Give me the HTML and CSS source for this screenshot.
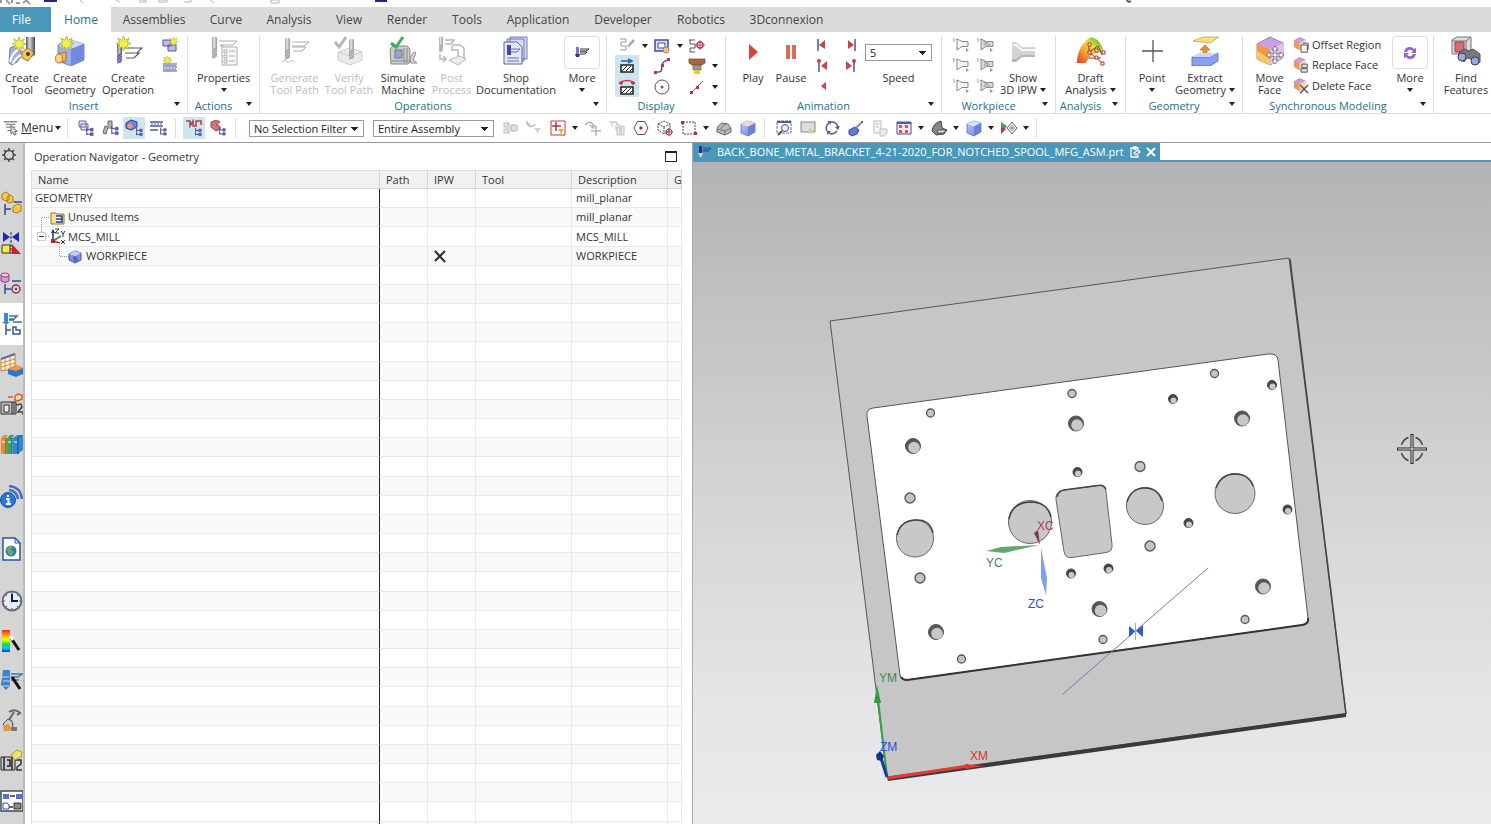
FILE: index.html
```html
<!DOCTYPE html>
<html lang="en">
<head>
<meta charset="utf-8">
<title>Operation Navigator - Geometry</title>
<link rel="stylesheet" href="styles.css">
</head>
<body>
<svg class="defs" aria-hidden="true">
  <defs>
    <linearGradient id="steel"><stop offset="0" stop-color="#55565c"/><stop offset=".4" stop-color="#d6d8e2"/><stop offset="1" stop-color="#4a4a52"/></linearGradient>
    <linearGradient id="blueface" x1="0" y1="0" x2="1" y2="1"><stop offset="0" stop-color="#b9c8fb"/><stop offset="1" stop-color="#6f85dd"/></linearGradient>
    <linearGradient id="bg" x1="0" y1="0" x2="0" y2="1"><stop offset="0" stop-color="#b2b3b4"/><stop offset=".25" stop-color="#c2c4c6"/><stop offset=".5" stop-color="#d2d4d6"/><stop offset=".8" stop-color="#e2e4e6"/><stop offset="1" stop-color="#eaebec"/></linearGradient>
    <linearGradient id="rainbow" x1="0" y1="0" x2="0" y2="1"><stop offset="0" stop-color="#f22"/><stop offset=".25" stop-color="#fa0"/><stop offset=".45" stop-color="#ef0"/><stop offset=".65" stop-color="#1d3"/><stop offset=".82" stop-color="#0cf"/><stop offset="1" stop-color="#12f"/></linearGradient>
    <linearGradient id="draft" x1="0" y1="1" x2="1" y2="0"><stop offset="0" stop-color="#e23b2a"/><stop offset=".35" stop-color="#f5a13c"/><stop offset=".6" stop-color="#e6dc42"/><stop offset="1" stop-color="#35a838"/></linearGradient>
  </defs>
  <symbol id="star" viewBox="0 0 12 12"><path d="M6 0l1.300 3.400L10.600 1.600 9 5l3 1-3 1.200 1.500 3.300L7.300 8.800 6 12 4.700 8.800 1.500 10.500 3 7.200 0 6l3-1L1.400 1.600l3.300 1.800z" fill="#f0ef4d" stroke="#a5a53a" stroke-width=".6"/></symbol>
  <symbol id="endmill" viewBox="0 0 8 28"><path d="M1 2q3-2 6 0v12l-1 3H2l-1-3z" fill="url(#steel)"/><path d="M1 14h6v10l-2 2H2l-1-2z" fill="#8a8fcb"/><path d="M1 18l6-4M1 22l6-5M1 26l6-5" stroke="#3f4382"/></symbol>
  <symbol id="tree" viewBox="0 0 10 10"><path d="M2 0v9M2 3h4M2 8h4" stroke="#34347c" fill="none"/><path d="M6 1.500h3v3H6zM6 6.500h3v3H6z" fill="#6a6ad0" stroke="#34347c" stroke-width=".7"/></symbol>
  <symbol id="cone" viewBox="0 0 18 18"><path d="M1 2v4M3 3.500h2" stroke="#999"/><path d="M4 3l5 2.500h6v5H9L4 14z" fill="#f5f5f5" stroke="#8b8b8b"/><path d="M13 12l3 2-3 2z" fill="#999"/></symbol>
  <symbol id="conef" viewBox="0 0 18 18"><path d="M1 2v4M3 3.500h2" stroke="#999"/><path d="M4 3l5 2.500h7v5H9L4 14z" fill="#d8d8d8" stroke="#8b8b8b"/><path d="M7 5l4 5M9 5l4 5M7 10l3-5" stroke="#999"/><path d="M13 12l3 2-3 2z" fill="#999"/></symbol>
  <symbol id="facecube" viewBox="0 0 20 20"><path d="M3 6l7-4 7 3v8l-7 5-7-4z" fill="#cf9be2" stroke="#8a6aa0" stroke-width=".7"/><path d="M3 6l7 3.500V18l-7-4z" fill="#f39a4a"/><path d="M10 9.500L17 5v8l-7 5z" fill="#fbd7a6"/></symbol>
  <symbol id="box" viewBox="0 0 18 18"><path d="M2 5l7-3 7 2v9l-7 4-7-3z" fill="url(#blueface)" stroke="#4a61b4" stroke-width=".7"/><path d="M2 5l7 2.500L16 4 9 2z" fill="#dbe4ff"/><path d="M9 7.500L16 4v9l-7 4z" fill="#6c80d4"/></symbol>
</svg>

<header class="app-head">
  <div class="quick-strip">
    <svg viewBox="0 0 1140 8" width="1140" height="8" aria-hidden="true"><path d="M1 0v3M6 0l4 4M12 0v3M16 3h4M23 3l4-3M26 0l4 4" stroke="#9a9a9a" stroke-width="2"/><path d="M44 0h13v2H44z" fill="#26267c"/><path d="M80 0l3 3M116 0l4 2M139 0h7v2h-7M158 0h9v2h-9M184 2h7V0M210 0l4 3M271 0h8v3h-8z" stroke="#b5b5b5" fill="none"/><path d="M375 1h12" stroke="#23238c" stroke-width="2"/><path d="M1127 0q1 3 4 1" stroke="#555" stroke-width="2" fill="none"/></svg>
  </div>
  <nav class="tabs">
    <button class="tab tab-file">File</button><button class="tab tab-on">Home</button><button class="tab w86">Assemblies</button><button class="tab w58">Curve</button><button class="tab w68">Analysis</button><button class="tab w52">View</button><button class="tab w64">Render</button><button class="tab w56">Tools</button><button class="tab w86">Application</button><button class="tab w84">Developer</button><button class="tab w72">Robotics</button><button class="tab w99">3Dconnexion</button>
  </nav>
</header>

<section class="ribbon">
  <div class="group g-insert">
    <div class="tools">
      <button class="tool"><svg viewBox="0 0 30 30"><path d="M19 1h9v18l-5 3-4-3z" fill="url(#steel)"/><path d="M15 16l6-4 6 5-6 8-6-3z" fill="#f3c64f" stroke="#7c6425" stroke-width=".8"/><circle cx="21" cy="18" r="2" fill="#3b3420"/><path d="M3 12q8-4 11 0v9l-4 5-5 3-3-2z" fill="#a6addb" stroke="#5c639c" stroke-width=".8"/><path d="M3 26q2-10 11-14M6 28q2-6 8-9" stroke="#fff" stroke-width="2" fill="none"/><use href="#star" x="5" y="1" width="14" height="14"/></svg><span>Create<br>Tool</span></button>
      <button class="tool"><svg viewBox="0 0 30 30"><path d="M3 9l12-5 14 4v16l-13 6-13-5z" fill="#9aaef4" stroke="#5b6fc0" stroke-width=".8"/><path d="M3 9l13 4 13-5-14-4z" fill="#cfd9ff"/><path d="M16 13l13-5v16l-13 6z" fill="#7287e0"/><path d="M3 18l8-2v9l-7 2z" fill="#fbb450" stroke="#a15e12" stroke-width=".8"/><ellipse cx="4" cy="22.500" rx="3.500" ry="4.500" fill="#ffd286" stroke="#a15e12" stroke-width=".8"/><use href="#star" x="4" y="0" width="15" height="15"/></svg><span>Create<br>Geometry</span></button>
      <button class="tool"><svg viewBox="0 0 30 30"><use href="#endmill" x="3" y="6" width="7" height="23"/><path d="M11 12h18l-5 5h-12M12 17h14l-5 5h-8" fill="none" stroke="#55555c" stroke-width="1.200"/><use href="#star" x="3" y="0" width="15" height="15"/></svg><span>Create<br>Operation</span></button>
      <div class="stack">
        <button class="mini" aria-label="Create method"><svg viewBox="0 0 18 18"><path d="M2 4h8v6H2zM7 9h8v6H7z" fill="#b9bfea" stroke="#55598d"/><use href="#star" x="8" y="1" width="9" height="9"/></svg></button>
        <button class="mini" aria-label="Create program"><svg viewBox="0 0 18 18"><path d="M2 8h14M2 11h14M2 15h14" stroke="#4a5590"/><path d="M2 9h13v6H2z" fill="#93a4cf"/><path d="M3 12h12" stroke="#fff" stroke-dasharray="2 1"/><use href="#star" x="2" y="0" width="9" height="9"/></svg></button>
      </div>
    </div>
    <footer>Insert<i class="caret"></i></footer>
  </div>
  <div class="group g-actions">
    <div class="tools">
      <button class="tool"><svg viewBox="0 0 30 30" class="grey"><use href="#endmill" x="2" y="0" width="7" height="24"/><path d="M10 5h18l-4 4H11M11 10h4" fill="none" stroke="#777"/><path d="M13 11h15v18H13z" fill="#f5f5f5" stroke="#777"/><path d="M15 14h3v3h-3zM15 19h3v3h-3zM15 24h3v3h-3zM20 15h6M20 20h6M20 25h6" fill="none" stroke="#777"/></svg><span>Properties</span><i class="caret"></i></button>
    </div>
    <footer>Actions<i class="caret"></i></footer>
  </div>
  <div class="group g-operations">
    <div class="tools">
      <button class="tool" disabled><svg viewBox="0 0 30 30" class="grey"><use href="#endmill" x="4" y="1" width="7" height="24"/><path d="M12 6h17l-5 4H12M12 11h14l-4 4h-9" fill="none" stroke="#777"/><path d="M2 26l4-2 2 3 4-3 2 2" stroke="#999" fill="none"/></svg><span>Generate<br>Tool Path</span></button>
      <button class="tool" disabled><svg viewBox="0 0 30 30" class="grey"><path d="M4 16l12-4 12 4v8l-12 5-12-5z" fill="#ddd" stroke="#aaa"/><path d="M4 16l12 4 12-4" fill="none" stroke="#aaa"/><use href="#endmill" x="14" y="2" width="7" height="23"/><path d="M1 6l4 5L12 1" fill="none" stroke="#888" stroke-width="3"/></svg><span>Verify<br>Tool Path</span></button>
      <button class="tool"><svg viewBox="0 0 30 30"><path d="M2 13l3-3h14l3 3v13l-2 2H3z" fill="#ccc" stroke="#888"/><path d="M7 14h7v8H7z" fill="#8fa9dd" stroke="#777"/><path d="M16 12v15M19 12v15M3 25h18" stroke="#888"/><path d="M22 22l4-6 2 1-3 7 4 3h-6z" fill="#ddd" stroke="#888"/><path d="M3 7l5 4L15 1" fill="none" stroke="#33b35b" stroke-width="3"/></svg><span>Simulate<br>Machine</span></button>
      <button class="tool" disabled><svg viewBox="0 0 30 30" class="grey"><use href="#endmill" x="1" y="0" width="6" height="17"/><path d="M8 4h9l-3 4H8M15 9h8l4 3v12M15 10v4h6v8" fill="none" stroke="#888" stroke-width="1.500"/><path d="M12 24l10-4 7 3-8 6z" fill="#e2e2e2" stroke="#888"/><path d="M3 18v5h5M6 20l3 3-3 3" fill="none" stroke="#888" stroke-width="1.500"/></svg><span>Post<br>Process</span></button>
      <button class="tool"><svg viewBox="0 0 30 30"><path d="M9 1h17v22H9zM6 3h17v22H6z" fill="#d8dbf7" stroke="#7277b4"/><path d="M3 6h13l5 5v17H3z" fill="#e6e8fc" stroke="#5b60a4"/><path d="M7 9v10M9 9v10" stroke="#444d9c" stroke-width="2"/><path d="M10 13h9l-3 3h-6M6 22h12M6 25h12" stroke="#6a6fa8" fill="none"/></svg><span>Shop<br>Documentation</span></button>
      <button class="tool"><span class="framed"><svg viewBox="0 0 18 18"><path d="M3 3h3v8H3z" fill="#777cc5"/><path d="M2 10h5l-1 3H3z" fill="#34347c"/><path d="M7 5h9l-3 2H7M7 8h7l-2 2H7" stroke="#333" fill="none"/></svg></span><span>More</span><i class="caret"></i></button>
    </div>
    <footer>Operations<i class="caret"></i></footer>
  </div>
  <div class="group g-display">
    <div class="tools">
      <button class="mini" aria-label="Path display"><svg viewBox="0 0 18 18"><path d="M2 2h6v3H3v4h5v4H2" fill="none" stroke="#999"/><path d="M9 9l6-7 2 2-6 6z" fill="#aaa"/></svg></button><i class="caret"></i>
      <button class="mini" aria-label="Layers"><svg viewBox="0 0 18 18"><path d="M2 3h13v11H2z" fill="#e0e3fb" stroke="#4249a5" stroke-width="1.500"/><path d="M5 6h7v5H5z" fill="#fff" stroke="#4249a5"/><circle cx="13" cy="13" r="3" fill="#efc65d" stroke="#8d7fae"/></svg></button><i class="caret"></i>
      <button class="mini" aria-label="Path points"><svg viewBox="0 0 18 18"><path d="M1 3h6M2 3v4h5v4H2v4h5" fill="none" stroke="#555"/><circle cx="12" cy="8" r="3" fill="none" stroke="#b5405a" stroke-width="1.500"/><path d="M12 3v10M7 8h10" stroke="#b5405a"/></svg></button><i></i>
      <button class="mini on" aria-label="Show 2D"><svg viewBox="0 0 18 18"><path d="M3 4h10M10 2l4 2-4 2" fill="none" stroke="#2465c0" stroke-width="1.500"/><path d="M3 8h12v7H3z" fill="#fff" stroke="#222" stroke-width="1.500"/><path d="M4 14l5-5M8 14l5-5M12 14l3-3" stroke="#222"/></svg></button><i></i>
      <button class="mini" aria-label="Spline"><svg viewBox="0 0 18 18"><path d="M3 15c8 1 5-4 6-7s2-4 6-5" fill="none" stroke="#6a4a58" stroke-width="1.500"/><path d="M1 14h3v3H1zM8 7h3v3H8zM14 1h3v3h-3z" fill="#c0344a"/></svg></button><i></i>
      <button class="mini" aria-label="Holder"><svg viewBox="0 0 18 18"><path d="M1 2h16v4l-3 2H4L1 6z" fill="#a9683f" stroke="#6c4428" stroke-width=".7"/><path d="M5 8h8v5H5z" fill="#999" stroke="#666" stroke-width=".7"/><path d="M6 13h6v4H6z" fill="#e7c93c"/></svg></button><i class="caret"></i>
      <button class="mini on" aria-label="Show 3D"><svg viewBox="0 0 18 18"><path d="M3 7V4q6-3 12 0v3" fill="none" stroke="#c63a4a" stroke-width="1.500"/><path d="M1 5h4M13 5h4" stroke="#c63a4a" stroke-width="2"/><path d="M3 9h12v7H3z" fill="#fff" stroke="#222" stroke-width="1.500"/><path d="M4 15l5-5M8 15l5-5M12 15l3-3" stroke="#222"/></svg></button><i></i>
      <button class="mini" aria-label="Circle"><svg viewBox="0 0 18 18"><circle cx="9" cy="9" r="7" fill="none" stroke="#555"/><circle cx="9" cy="9" r="1.500" fill="#c0344a"/></svg></button><i></i>
      <button class="mini" aria-label="Line"><svg viewBox="0 0 18 18"><path d="M3 15L15 3" stroke="#666"/><path d="M2 13h3v3H2zM8 8h3v3H8z" fill="#c0344a"/></svg></button><i class="caret"></i>
    </div>
    <footer>Display<i class="caret"></i></footer>
  </div>
  <div class="group g-animation">
    <div class="tools">
      <button class="tool"><svg viewBox="0 0 30 30"><path d="M11 8l9 8-9 8z" fill="#d8443a"/></svg><span>Play</span></button>
      <button class="tool"><svg viewBox="0 0 30 30"><path d="M10 9h4v14h-4zM16 9h4v14h-4z" fill="#df6a5b"/></svg><span>Pause</span></button>
      <div class="stack">
        <button class="mini" aria-label="To start"><svg viewBox="0 0 18 18"><path d="M4 3v12" stroke="#55557c" stroke-width="1.500"/><path d="M11 4v9L5 9z" fill="#c8434c"/></svg></button>
        <button class="mini" aria-label="Previous path"><svg viewBox="0 0 18 18"><path d="M5 3v13" stroke="#55557c" stroke-width="1.500"/><circle cx="5" cy="5" r="2" fill="#c8434c"/><path d="M13 5v9L7 10z" fill="#c8434c"/></svg></button>
        <button class="mini" aria-label="Step back"><svg viewBox="0 0 18 18"><path d="M12 5v8L7 9z" fill="#c8434c"/></svg></button>
      </div>
      <div class="stack">
        <button class="mini" aria-label="To end"><svg viewBox="0 0 18 18"><path d="M13 3v12" stroke="#55557c" stroke-width="1.500"/><path d="M6 4v9l6-4z" fill="#c8434c"/></svg></button>
        <button class="mini" aria-label="Next path"><svg viewBox="0 0 18 18"><path d="M12 3v13" stroke="#55557c" stroke-width="1.500"/><circle cx="12" cy="5" r="2" fill="#c8434c"/><path d="M4 5v9l6-4z" fill="#c8434c"/></svg></button>
      </div>
      <label class="speed"><select><option>5</option></select><span>Speed</span></label>
    </div>
    <footer>Animation<i class="caret"></i></footer>
  </div>
  <div class="group g-workpiece">
    <div class="tools">
      <div class="stack"><button class="mini" aria-label="Workpiece 1"><svg><use href="#cone"/></svg></button><button class="mini" aria-label="Workpiece 2"><svg><use href="#cone"/></svg></button><button class="mini" aria-label="Workpiece 3"><svg><use href="#cone"/></svg></button></div>
      <div class="stack"><button class="mini" aria-label="Workpiece 4"><svg><use href="#conef"/></svg></button><button class="mini" aria-label="Workpiece 5"><svg><use href="#conef"/></svg></button><button class="mini" aria-label="Workpiece 6"><svg><use href="#conef"/></svg></button></div>
      <button class="tool"><svg viewBox="0 0 30 30"><path d="M4 6h4l6 5h13v10H14l-6 5H4z" fill="#d3d3d3"/><path d="M5 9h3l6 5h13" stroke="#f7f7f7" stroke-width="2" fill="none"/><path d="M4 23h4l6-4h13v2H14l-6 5H4z" fill="#b5b5b5"/></svg><span>Show<br>3D IPW<i class="caret"></i></span></button>
    </div>
    <footer>Workpiece<i class="caret"></i></footer>
  </div>
  <div class="group g-analysis">
    <div class="tools">
      <button class="tool"><svg viewBox="0 0 30 30"><path d="M1 27C1 16 6 6 15 1c8 2 12 9 13 16-8-2-14 1-18 10z" fill="url(#draft)"/><path d="M13 8v8l6 5 6 5M13 16l9-6 4 9M13 22h12" stroke="#7c3b20" fill="none"/><path d="M12 7h3v3h-3zM12 15h3v3h-3zM19 13h3v3h-3zM26 15h3v3h-3zM19 20h3v3h-3zM25 26h3v3h-3z" fill="#fff" stroke="#b2301c"/></svg><span>Draft<br>Analysis<i class="caret"></i></span></button>
    </div>
    <footer>Analysis<i class="caret"></i></footer>
  </div>
  <div class="group g-geometry">
    <div class="tools">
      <button class="tool"><svg viewBox="0 0 30 30"><path d="M16 4v22M5 15h21" stroke="#555" stroke-width="1.300"/></svg><span>Point</span><i class="caret"></i></button>
      <button class="tool"><svg viewBox="0 0 30 30"><path d="M3 5l10-4h16l-9 6z" fill="#fae07e" stroke="#b99a3c" stroke-width=".7"/><path d="M13 20v-6h-3l5-5 5 5h-3v6z" fill="#f08b3a" stroke="#b15a17" stroke-width=".6"/><path d="M2 21l7-4h19l-7 5z" fill="#bccbff"/><path d="M2 21h18l8-4v8l-8 5H2z" fill="#88a0ee" stroke="#5268b5" stroke-width=".8"/><path d="M2 21l7-4h19l-8 4z" fill="#cbd7ff"/></svg><span>Extract<br>Geometry<i class="caret"></i></span></button>
    </div>
    <footer>Geometry<i class="caret"></i></footer>
  </div>
  <div class="group g-sync">
    <div class="tools">
      <button class="tool"><svg viewBox="0 0 30 30"><path d="M2 8l13-7 13 6v15l-13 7-13-6z" fill="#caa0e0" stroke="#86689e" stroke-width=".8"/><path d="M2 8l13 6v15L2 23z" fill="#f49a3d"/><path d="M2 15l13 8v6L2 23z" fill="#f9c66a"/><path d="M15 14l13-7v15l-13 7z" fill="#dcc2ec"/><path d="M20 10l3 4h-2v4h4v-2l4 3-4 3v-2h-4v4h2l-3 4-3-4h2v-4h-4v2l-4-3 4-3v2h4v-4h-2z" fill="#fff" stroke="#555" stroke-width=".8"/></svg><span>Move<br>Face</span></button>
      <div class="stack wide">
        <button class="mini named"><svg viewBox="0 0 20 20"><use href="#facecube" width="17" height="17"/><path d="M10 10h7v8h-7zM12 8h6v7" fill="#fff" stroke="#444"/></svg>Offset Region</button>
        <button class="mini named"><svg viewBox="0 0 20 20"><use href="#facecube" width="17" height="17"/><path d="M11 9h6v4h-6zM10 14h7v4h-7z" fill="#ddd" stroke="#555"/></svg>Replace Face</button>
        <button class="mini named"><svg viewBox="0 0 20 20"><use href="#facecube" width="17" height="17"/><path d="M9 9l9 9M18 9l-9 9" stroke="#555" stroke-width="1.500"/></svg>Delete Face</button>
      </div>
      <button class="tool"><span class="framed"><svg viewBox="0 0 18 18"><path d="M3 8q1-5 6-5 3 0 4 2l2-1v5h-5l2-2q-4-3-6 1zM15 10q-1 5-6 5-3 0-4-2l-2 1V9h5l-2 2q4 3 6-1z" fill="#9a62c4"/></svg></span><span>More</span><i class="caret"></i></button>
    </div>
    <footer>Synchronous Modeling<i class="caret"></i></footer>
  </div>
  <div class="group g-find">
    <div class="tools">
      <button class="tool"><svg viewBox="0 0 30 30"><path d="M1 4l5-3h14v12l-4 5H1z" fill="#dcdcdc" stroke="#777"/><path d="M1 5h14v12M15 5l5-4" fill="none" stroke="#777"/><path d="M4 6h9v7l-4 3H4z" fill="#da6a78" stroke="#a23f4d"/><path d="M8 16l6-3 4 2 4-2 7 5v8l-5 3-4-6-4-1-3 4-5-4z" fill="#77787f" stroke="#555"/><circle cx="11" cy="21" r="4" fill="#9ba6e8" stroke="#444"/><circle cx="24" cy="25" r="4" fill="#9ba6e8" stroke="#444"/></svg><span>Find<br>Features</span></button>
    </div>
  </div>
</section>

<section class="subbar">
  <button class="menu"><svg viewBox="0 0 18 18"><path d="M1 2h15M3 5h11M3 8h11M5 12h8" stroke="#888" stroke-width="1.500"/><path d="M9 6v10l2-2 2 3 2-1-2-3h3z" fill="#ddd" stroke="#555"/></svg><span><u>M</u>enu</span><i class="caret"></i></button>
  <span class="sep"></span>
  <button class="mini" aria-label="Program order view"><svg viewBox="0 0 18 18"><path d="M2 2h7v6H2zM4 5h7v6H4z" fill="#dfe1f7" stroke="#666a9e"/><use href="#tree" x="8" y="8" width="9" height="9"/></svg></button>
  <button class="mini" aria-label="Machine tool view"><svg viewBox="0 0 18 18"><path d="M2 14l2-7 3 1-2 7zM7 2h4v7H7z" fill="#b4b6cc" stroke="#667"/><circle cx="8" cy="8" r="1.500" fill="#d9a646"/><use href="#tree" x="9" y="6" width="9" height="11"/></svg></button>
  <button class="mini on" aria-label="Geometry view"><svg viewBox="0 0 18 18"><path d="M1 4l5-3 6 2v5l-6 3-5-2z" fill="#6f85dd" stroke="#333f7c"/><circle cx="5" cy="7" r="2.500" fill="#ef9b6b"/><use href="#tree" x="10" y="9" width="8" height="8"/></svg></button>
  <button class="mini" aria-label="Method view"><svg viewBox="0 0 18 18"><path d="M1 3h13M1 7h13M1 11h8" stroke="#4a5d94" stroke-width="1.500"/><path d="M2 5h12" stroke="#4a5d94" stroke-dasharray="2 1"/><use href="#tree" x="10" y="8" width="8" height="9"/></svg></button>
  <span class="sep"></span>
  <button class="mini on" aria-label="Operation filter"><svg viewBox="0 0 18 18"><path d="M1 2h4v5l3-5v5h3V2h5v4" fill="none" stroke="#b13a48" stroke-width="1.500"/><use href="#tree" x="9" y="8" width="8" height="10"/></svg></button>
  <button class="mini" aria-label="Feature filter"><svg viewBox="0 0 18 18"><path d="M2 3q6-3 9 0l-4 3q5 0 4 4l-4 2-5-4z" fill="#cd7480" stroke="#8c4a55"/><use href="#tree" x="9" y="8" width="8" height="9"/></svg></button>
  <span class="sep"></span>
  <select class="filter" aria-label="Selection filter"><option>No Selection Filter</option></select>
  <select class="scope" aria-label="Selection scope"><option>Entire Assembly</option></select>
  <button class="mini" aria-label="Select all"><svg viewBox="0 0 18 18" class="dim"><path d="M3 4h4v4H3zM3 10h4v4H3zM8 3v12M10 6h6v6h-6z" fill="#ddd" stroke="#888"/><circle cx="13" cy="9" r="3" fill="#ccc" stroke="#888"/></svg></button>
  <button class="mini" aria-label="Reset filter"><svg viewBox="0 0 18 18" class="dim"><path d="M2 5q4 5 8 0M2 5V2M2 5h3" fill="none" stroke="#888" stroke-width="1.500"/><path d="M9 9h7l-3 4v4l-1-4z" fill="#aaa"/></svg></button>
  <button class="mini" aria-label="Detail filter"><svg viewBox="0 0 18 18"><path d="M2 2h14v14H2z" fill="#fff" stroke="#c23b3b"/><path d="M7 3v9M3 7h9" stroke="#a33648" stroke-width="1.500"/><path d="M9 10h6l-2 3v3l-2-3z" fill="#f0a840"/></svg></button><i class="caret"></i>
  <button class="mini" aria-label="Snap rotate"><svg viewBox="0 0 18 18" class="dim"><path d="M1 6q4-5 8-1v3M6 6l3 3 2-3M12 7v10M7 12h10" fill="none" stroke="#777" stroke-width="1.500"/></svg></button>
  <button class="mini" aria-label="Similar"><svg viewBox="0 0 18 18" class="dim"><path d="M1 3h8v3h4M4 4v4M8 6v5M9 8h3v8H9zM13 7h3v9h-3z" fill="#ddd" stroke="#888"/></svg></button>
  <button class="mini" aria-label="Polygon"><svg viewBox="0 0 18 18"><path d="M5.500 2.500h7L16 9l-3.500 6.500h-7L2 9z" fill="#fff" stroke="#555"/><circle cx="9" cy="9" r="1.700" fill="#b32f40"/></svg></button>
  <button class="mini" aria-label="Inner cube"><svg viewBox="0 0 18 18"><path d="M2 5l6-3 6 3v6l-6 4-6-4zM2 5l6 3 6-3M8 8v7" fill="none" stroke="#444" stroke-dasharray="2 1"/><circle cx="13" cy="13" r="3" fill="none" stroke="#a33648"/><path d="M13 9v8M9 13h8" stroke="#a33648"/></svg></button>
  <button class="mini" aria-label="Rectangle select"><svg viewBox="0 0 18 18"><path d="M3 3h12v12H3z" fill="none" stroke="#444" stroke-dasharray="2 1"/><path d="M1 2h3v3H1zM14 13h3v3h-3z" fill="#b32f40"/></svg></button><i class="caret"></i>
  <button class="mini" aria-label="Show faces"><svg viewBox="0 0 18 18"><path d="M2 10q0-3 5-6l6 1 3 4v4l-6 3-8-3z" fill="#bbb" stroke="#666"/><path d="M2 10l8 2 6-3M10 12v4M6 10q1-4 5-5" stroke="#777" fill="none"/></svg></button>
  <button class="mini" aria-label="Highlight cube"><svg viewBox="0 0 18 18"><use href="#box"/><path d="M2 5l7 2.500L16 4 9 2z" fill="#f9d3d3"/></svg></button>
  <span class="sep tight"></span>
  <button class="mini" aria-label="Fit"><svg viewBox="0 0 18 18"><path d="M2 2h14v12H2z" fill="none" stroke="#5c6ab4" stroke-dasharray="3 1"/><path d="M2 3h14" stroke="#4a5aa0" stroke-width="2"/><circle cx="10" cy="9" r="3.500" fill="#e6efff" stroke="#555"/><path d="M7 12l-4 4" stroke="#555" stroke-width="2"/></svg></button>
  <button class="mini" aria-label="Window"><svg viewBox="0 0 18 18"><path d="M2 3h14v10H2z" fill="#ddd" stroke="#888"/><path d="M10 9l5 2-2 4-4-2z" fill="#d7c79a"/></svg></button>
  <button class="mini" aria-label="Rotate"><svg viewBox="0 0 18 18"><path d="M4 12a6 6 0 0 1 2-8M8 3a6 6 0 0 1 7 5M14 12a6 6 0 0 1-8 2" fill="none" stroke="#4e5e90" stroke-width="1.500"/><path d="M4 2h4v4zM17 7l-2 4-3-3zM4 16v-4h4z" fill="#4e5e90"/></svg></button>
  <button class="mini" aria-label="Perspective"><svg viewBox="0 0 18 18"><path d="M2 11l6-3 4 3-2 4-5 2-3-2z" fill="#6378d8" stroke="#39478f"/><path d="M9 9l5-5" stroke="#7c86c9" stroke-width="2"/><path d="M14 3h2" stroke="#b33" stroke-width="2"/></svg></button>
  <button class="mini" aria-label="Hide"><svg viewBox="0 0 18 18" class="dim"><path d="M3 2h7v12H3zM5 5h3M5 8h3" fill="#eee" stroke="#888"/><path d="M9 10h7v4l-3 3H9z" fill="#ddd" stroke="#888"/></svg></button>
  <button class="mini" aria-label="Layout"><svg viewBox="0 0 18 18"><path d="M2 3h14v12H2z" fill="#f6eaea" stroke="#3d4f9c"/><path d="M2 3h14v2H2z" fill="#4b5fb2"/><path d="M4 6h3v3H4zM10 6h3v3h-3zM4 11h3v3H4zM10 11h3v3h-3z" fill="#d4555f"/></svg></button><i class="caret"></i>
  <button class="mini" aria-label="Shading"><svg viewBox="0 0 18 18"><path d="M2 12q1-8 9-10l1 7 5 2-3 4-8 1z" fill="#888" stroke="#444"/><path d="M8 11h8l-2 3H7z" fill="#ddd" stroke="#555"/></svg></button><i class="caret"></i>
  <button class="mini" aria-label="View orientation"><svg viewBox="0 0 18 18"><use href="#box"/></svg></button><i class="caret"></i>
  <button class="mini" aria-label="Section"><svg viewBox="0 0 18 18"><path d="M1 3l6 4-6 8z" fill="#4a9c57"/><path d="M1 8l5 2-5 5z" fill="#c0344a"/><path d="M12 3l5 6-5 6-5-6z" fill="#eee" stroke="#666"/><path d="M12 6v6M9 9h6" stroke="#888"/></svg></button><i class="caret"></i>
  <span class="sep tight"></span>
</section>

<main class="work">
  <aside class="rail">
    <button class="r-gear" aria-label="Settings"><svg viewBox="0 0 16 16"><circle cx="8" cy="8" r="4.500" fill="none" stroke="#444" stroke-width="1.500"/><path d="M8 1v3M8 12v3M1 8h3M12 8h3M3 3l2 2M11 11l2 2M13 3l-2 2M5 11l-2 2" stroke="#444" stroke-width="1.500"/></svg></button>
    <button aria-label="Assembly navigator"><svg viewBox="0 0 24 24"><path d="M2 3l4-2 3 2v6l-3 1-4-2zM7 6l4-2 2 2v5l-4 1-2-1zM13 16l4-3 4 1v6l-4 2-4-1z" fill="#f7c948" stroke="#ad7a12"/><path d="M5 13v11M5 18h6M14 11h8" stroke="#3b478c" fill="none" stroke-width="1.500"/></svg></button>
    <button aria-label="Constraint navigator"><svg viewBox="0 0 24 24"><path d="M3 1l7 5-7 5zM19 1l-7 5 7 5z" fill="#1b25c0"/><path d="M2 14h8v8H2z" fill="#ffe93a" stroke="#333"/><path d="M12 13l9 10h-9z" fill="#c9242b"/><path d="M11 1v22" stroke="#333" stroke-dasharray="3 1"/></svg></button>
    <button aria-label="Part navigator"><svg viewBox="0 0 24 24"><path d="M1 4v6q4 3 8 0V4z" fill="#d69acb" stroke="#8b3f7c"/><ellipse cx="5" cy="4" rx="4" ry="2" fill="#f0cbe8" stroke="#8b3f7c"/><path d="M5 13v10M5 18h6M12 10h9" stroke="#3b478c" fill="none" stroke-width="1.500"/><circle cx="16" cy="18" r="4" fill="none" stroke="#8b2f5f" stroke-width="1.500"/><circle cx="16" cy="18" r="1.200" fill="#8b2f5f"/></svg></button>
    <button class="active" aria-label="Operation navigator"><svg viewBox="0 0 24 24"><path d="M3 1h4v9H9l-4 3-4-3h2z" fill="#3f86d2"/><path d="M8 4h8l-3 3H8M8 8h5M12 10h9" stroke="#3a6ea8" fill="none" stroke-width="1.500"/><path d="M5 13v10M5 18h5M12 15h3v3h4v4h-7z" stroke="#38588c" fill="none" stroke-width="1.500"/></svg></button>
    <button aria-label="Machining wizard"><svg viewBox="0 0 24 24"><path d="M1 6l14-5v15l-14 2z" fill="#fff1d8" stroke="#c0812c"/><path d="M1 6l14-5" stroke="#5566c8" stroke-width="2"/><path d="M1 10l14-4M1 14l14-4M5 5v12M10 3v13" stroke="#d48f3c"/><path d="M8 16l8-4 7 3v6l-7 3-8-3z" fill="#2878d2"/><path d="M8 16l8-4 7 3-7 3z" fill="#f59a32"/></svg></button>
    <button aria-label="Machine navigator"><svg viewBox="0 0 24 24"><path d="M1 9h15v12H1z" fill="#bbb" stroke="#333"/><path d="M4 12h5v7H4zM12 9v12M14 9v12" fill="#eee" stroke="#333"/><path d="M16 12l5-1 1 3-4 5h5v3" stroke="#444" fill="none" stroke-width="1.500"/><path d="M8 4h5M15 3l3-2 4 1v4l-4 2-3-1z" fill="#fbd6bf" stroke="#db5a1e" stroke-width="1.500"/></svg></button>
    <button aria-label="Reuse library"><svg viewBox="0 0 24 24"><path d="M1 5l3-3h4l-2 3v16H1z" fill="#ef8a2c"/><path d="M7 5l3-3h4l-2 3v16H7z" fill="#39a845"/><path d="M13 5l4-3h6v15l-5 4h-5z" fill="#2f87d8"/><path d="M6 5v16M12 5v16M18 5v16M18 5l4-3" stroke="#1d4e80"/><path d="M2 9h3M8 9h3M14 9h3" stroke="#fff"/></svg></button>
    <button class="tall" aria-label="HD3D tools"><svg viewBox="0 0 24 24"><circle cx="8" cy="15" r="7.500" fill="#2b78d4" stroke="#17509c"/><path d="M8 10v2M6 14h2.500v5M6 19h5" stroke="#fff" stroke-width="2" fill="none"/><path d="M9 5q8 1 9 9M9 1q12 1 13 13" fill="none" stroke="#4170bf" stroke-width="2.500"/></svg></button>
    <button class="tall" aria-label="Web browser"><svg viewBox="0 0 24 24"><path d="M3 1h12l5 5v17H3z" fill="#fff" stroke="#2b56a5" stroke-width="1.500"/><path d="M15 1v5h5" fill="none" stroke="#2b56a5"/><circle cx="11" cy="14" r="5.500" fill="#3873c0"/><path d="M7 11q3-3 6-2l-2 4 3 2-3 4q-4-2-4-8z" fill="#64b255"/></svg></button>
    <button class="tall" aria-label="History"><svg viewBox="0 0 24 24"><circle cx="12" cy="12" r="9.500" fill="#e7edfb" stroke="#666e7a" stroke-width="2"/><path d="M12 5v7h6" fill="none" stroke="#111c50" stroke-width="2"/><path d="M12 3v2M12 19v2M3 12h2M19 12h2M6 6l1 1M18 18l-1-1M18 6l-1 1M6 18l1-1" stroke="#555"/></svg></button>
    <button aria-label="Colour wizard"><svg viewBox="0 0 24 24"><path d="M2 1h8v22H2z" fill="url(#rainbow)"/><path d="M11 9l8 12" stroke="#111" stroke-width="3"/><path d="M10 7l3 4" stroke="#fff" stroke-width="3"/></svg></button>
    <button aria-label="Operation wizard"><svg viewBox="0 0 24 24"><path d="M3 1h7v16l-4 4-5-5z" fill="#4182ca"/><path d="M1 8h8M3 12h8M2 17h8" stroke="#bde" /><path d="M11 5h11l-4 3h-7M11 11h8" stroke="#4773ae" stroke-width="1.500" fill="none"/><path d="M12 8l8 12" stroke="#111" stroke-width="3"/></svg></button>
    <button aria-label="Robot wizard"><svg viewBox="0 0 24 24"><path d="M9 3q6-4 11 1l-3 2M14 3l-5 8 4 5" fill="none" stroke="#666" stroke-width="2"/><path d="M8 10l4 2 1 7H6l-3-4z" fill="#ccc" stroke="#555"/><path d="M3 17l5-2 3 3-1 4H4z" fill="#ee9138"/><path d="M11 18h6v4h-6z" fill="#777"/></svg></button>
    <button aria-label="Tool library"><svg viewBox="0 0 24 24"><path d="M1 8h14v13H1z" fill="#ccc" stroke="#222"/><path d="M4 8v13M7 11h3v6H7M12 8v13" stroke="#222" stroke-width="1.500" fill="none"/><path d="M15 11h6v4l-4 3v3h5" stroke="#333" stroke-width="1.500" fill="none"/><path d="M11 6l6-5 5 2-1 5-6 3z" fill="#eee46b" stroke="#a69d32"/></svg></button>
    <button aria-label="Workspace map"><svg viewBox="0 0 24 24"><path d="M1 2h22v20H1z" fill="#fff" stroke="#35505c" stroke-width="1.500"/><path d="M3 5h6v5H3zM16 5h6v5h-6z" fill="#606ad0"/><path d="M10 7h5M9 18h4" stroke="#333" stroke-width="1.500"/><path d="M3 14h4l2 2v4H3z" fill="#fff" stroke="#4048b0"/><path d="M14 14h7v6h-7z" fill="#888" stroke="#333"/></svg></button>
  </aside>

  <section class="navigator">
    <header><h1>Operation Navigator - Geometry</h1><button aria-label="Maximise"></button></header>
    <div class="table-wrap">
    <table>
      <colgroup><col><col class="c48"><col class="c48"><col class="c96"><col class="c96"><col class="c14"></colgroup>
      <thead><tr><th>Name</th><th>Path</th><th>IPW</th><th>Tool</th><th>Description</th><th>G</th></tr></thead>
      <tbody>
        <tr><td>GEOMETRY</td><td></td><td></td><td></td><td>mill_planar</td><td></td></tr>
        <tr><td><div class="node"><svg width="33" height="19" viewBox="0 0 33 19"><path d="M6.500 19V9.500H15" fill="none" stroke="#999" stroke-dasharray="1 1"/><path d="M16 5h5l1 1h7v10H16z" fill="#f5e393" stroke="#8f7b2f"/><path d="M21 8h6v6h-6M21 11h6" fill="#fff" stroke="#223a9a" stroke-width="1.500"/></svg>Unused Items</div></td><td></td><td></td><td></td><td>mill_planar</td><td></td></tr>
        <tr><td><div class="node"><svg width="33" height="19" viewBox="0 0 33 19"><path d="M6.500 0v6M11 9.500h4" stroke="#999" stroke-dasharray="1 1"/><path d="M2.500 5.500h8v8h-8z" fill="#fff" stroke="#ccc"/><path d="M4 9.500h5" stroke="#333"/><path d="M18 15V3" stroke="#1c2f90" stroke-width="1.500"/><path d="M16 6l2-4 2 4z" fill="#1c2f90"/><path d="M18 14l8-5" stroke="#288c3c" stroke-width="1.500"/><path d="M18 14l7 2" stroke="#b9252b" stroke-width="1.500"/><path d="M16 12h4v4h-4z" fill="#b9252b"/><path d="M20 2h4l-4 4h4M26 4l2 3 2-3M28 7v3M26 13l4 4M30 13l-4 4" fill="none" stroke="#333"/></svg>MCS_MILL</div></td><td></td><td></td><td></td><td>MCS_MILL</td><td></td></tr>
        <tr><td><div class="node"><svg width="51" height="19" viewBox="0 0 51 19"><path d="M24.500 0v9.500H34" fill="none" stroke="#999" stroke-dasharray="1 1"/><path d="M34 7l6-3 6 2v7l-6 3-6-3z" fill="#7e91e6" stroke="#4858a6"/><path d="M34 7l6 2 6-3-6-2z" fill="#c4cffb"/><path d="M38 10l3-1 2 2v3l-3 1-2-2z" fill="#5467c8"/></svg>WORKPIECE</div></td><td></td><td class="mark"><svg width="14" height="14" viewBox="0 0 14 14"><path d="M2 2l10 11M12 2L2 12" stroke="#2b2b2b" stroke-width="2"/></svg></td><td></td><td>WORKPIECE</td><td></td></tr>
        <tr><td></td><td></td><td></td><td></td><td></td><td></td></tr><tr><td></td><td></td><td></td><td></td><td></td><td></td></tr><tr><td></td><td></td><td></td><td></td><td></td><td></td></tr><tr><td></td><td></td><td></td><td></td><td></td><td></td></tr>
        <tr><td></td><td></td><td></td><td></td><td></td><td></td></tr><tr><td></td><td></td><td></td><td></td><td></td><td></td></tr><tr><td></td><td></td><td></td><td></td><td></td><td></td></tr><tr><td></td><td></td><td></td><td></td><td></td><td></td></tr>
        <tr><td></td><td></td><td></td><td></td><td></td><td></td></tr><tr><td></td><td></td><td></td><td></td><td></td><td></td></tr><tr><td></td><td></td><td></td><td></td><td></td><td></td></tr><tr><td></td><td></td><td></td><td></td><td></td><td></td></tr>
        <tr><td></td><td></td><td></td><td></td><td></td><td></td></tr><tr><td></td><td></td><td></td><td></td><td></td><td></td></tr><tr><td></td><td></td><td></td><td></td><td></td><td></td></tr><tr><td></td><td></td><td></td><td></td><td></td><td></td></tr>
        <tr><td></td><td></td><td></td><td></td><td></td><td></td></tr><tr><td></td><td></td><td></td><td></td><td></td><td></td></tr><tr><td></td><td></td><td></td><td></td><td></td><td></td></tr><tr><td></td><td></td><td></td><td></td><td></td><td></td></tr>
        <tr><td></td><td></td><td></td><td></td><td></td><td></td></tr><tr><td></td><td></td><td></td><td></td><td></td><td></td></tr><tr><td></td><td></td><td></td><td></td><td></td><td></td></tr><tr><td></td><td></td><td></td><td></td><td></td><td></td></tr>
        <tr><td></td><td></td><td></td><td></td><td></td><td></td></tr><tr><td></td><td></td><td></td><td></td><td></td><td></td></tr><tr><td></td><td></td><td></td><td></td><td></td><td></td></tr><tr><td></td><td></td><td></td><td></td><td></td><td></td></tr>
        <tr><td></td><td></td><td></td><td></td><td></td><td></td></tr><tr><td></td><td></td><td></td><td></td><td></td><td></td></tr>
      </tbody>
    </table>
    </div>
  </section>

  <section class="viewport">
    <div class="doc-tabs">
      <div class="doc-tab">
        <svg width="16" height="16" viewBox="0 0 16 16"><path d="M3 2h3v8H3z" fill="#23318c"/><path d="M2 9h5l-2 5z" fill="#e6d7a0"/><path d="M7 4h8l-3 2H7M7 7h6" stroke="#2c4a84" fill="none"/></svg>
        <span>BACK_BONE_METAL_BRACKET_4-21-2020_FOR_NOTCHED_SPOOL_MFG_ASM.prt</span>
        <svg width="12" height="12" viewBox="0 0 12 12"><path d="M9 4V2H2v9h7V9M4 1h3v2H4M5 7l4-3 2 2-4 3z" fill="none" stroke="#fff" stroke-width="1.300"/></svg>
        <button aria-label="Close"><svg width="10" height="10" viewBox="0 0 10 10"><path d="M1 1l8 8M9 1L1 9" stroke="#fff" stroke-width="2"/></svg></button>
      </div>
    </div>
    <svg class="scene" viewBox="693 162 798 662" preserveAspectRatio="xMinYMin slice">
      <path d="M693 162h798v662H693z" fill="url(#bg)"/>
      <path d="M830 321L1289 258 1346 714 887 777z" fill="#c6c6c6" stroke="#555"/>
      <path d="M887 777L1346 713v4L888 781z" fill="#3a3a3a"/>
      <path d="M1290 259l56 455" stroke="#444" stroke-width="1.500"/>
      <path d="M873 408L1268 354q9-1 10 6L1308 618q1 6-6 7L907 680q-6 1-7-5L867 416q-1-7 6-8z" fill="#fff" stroke="#555"/>
      <path d="M1308 618q1 6-6 7L907 680q-4 0-6-3" fill="none" stroke="#333" stroke-width="2"/>
      <g fill="#c8c8c8" stroke="#666">
        <circle cx="1030" cy="522" r="21.500"/><circle cx="915" cy="538.500" r="18.500"/><circle cx="1145" cy="506" r="18.500"/><circle cx="1235" cy="493.500" r="20"/>
        <path d="M1064 490l34-4.500q7-1 8 6l6 53q1 7-6 8l-34 5q-7 1-8-6l-8-52q-1-8 8-9.500z"/>
      </g>
      <path d="M1009 519q3-16 21-17 18 0 21 15M897 535q3-14 18-15t18 13M1127 502q4-14 18-14 13 0 17 13M1216 488q5-14 19-14 14 0 18 12M1057 497q1-6 7-7l34-4.500q6-1 8 4" fill="none" stroke="#444" stroke-width="1.500"/>
      <g fill="#555" stroke="#555">
        <circle cx="913" cy="446" r="7.500"/><circle cx="1076" cy="423.500" r="7.500"/><circle cx="1242" cy="418.500" r="7.500"/><circle cx="936" cy="632" r="7.500"/><circle cx="1099.500" cy="609" r="7.500"/><circle cx="1263" cy="586.500" r="7.500"/>
      </g>
      <g fill="#c8c8c8">
        <circle cx="914" cy="447.500" r="5.800"/><circle cx="1077" cy="425" r="5.800"/><circle cx="1243" cy="420" r="5.800"/><circle cx="937" cy="633.500" r="5.800"/><circle cx="1100.500" cy="610.500" r="5.800"/><circle cx="1264" cy="588" r="5.800"/>
      </g>
      <g fill="#c4c4c4" stroke="#555" stroke-width="1.300">
        <circle cx="930.500" cy="413" r="4"/><circle cx="1072" cy="393.500" r="4"/><circle cx="1214.500" cy="373.500" r="4"/><circle cx="1140" cy="466.500" r="5"/><circle cx="910" cy="498" r="5"/><circle cx="920" cy="578" r="5"/><circle cx="1150" cy="546" r="5"/><circle cx="961.500" cy="659" r="4"/><circle cx="1103" cy="639.500" r="4"/><circle cx="1245" cy="619.500" r="4"/>
      </g>
      <g fill="#444" stroke="#444">
        <circle cx="1272" cy="385" r="4.500"/><circle cx="1173" cy="399" r="4.500"/><circle cx="1077.500" cy="472" r="4.500"/><circle cx="1188.500" cy="523" r="4.500"/><circle cx="1287.500" cy="509.500" r="4.500"/><circle cx="1071" cy="573.500" r="4.500"/><circle cx="1108.500" cy="568.500" r="4.500"/>
      </g>
      <g fill="#c8c8c8">
        <circle cx="1272.500" cy="386.500" r="3"/><circle cx="1173.500" cy="400.500" r="3"/><circle cx="1078" cy="473.500" r="3"/><circle cx="1189" cy="524.500" r="3"/><circle cx="1288" cy="511" r="3"/><circle cx="1071.500" cy="575" r="3"/><circle cx="1109" cy="570" r="3"/>
      </g>
      <path d="M1063 694L1208 568" stroke="#7878b0"/>
      <path d="M1129 626l6 5-6 6zM1143 625l-7 6 7 6z" fill="#2c5cc4"/><path d="M1135.500 623v17" stroke="#8aa8d8"/>
      <path d="M986 551l15-4 38-2-35 8z" fill="#61a871"/><path d="M1041 548l6 30-1 17-5-17z" fill="#7ba0ee"/><path d="M1034 533l4-3 2 15z" fill="#7b3b43"/>
      <path d="M887 777l-9-78" stroke="#35a047" stroke-width="2"/><path d="M877 685l4 18h-7z" fill="#2f9c42"/>
      <path d="M887 777l-6-19" stroke="#153a9c" stroke-width="3"/><path d="M880 751l4 5-2 5-5-1-1-5z" fill="#0c3590"/>
      <path d="M888 778l80-12" stroke="#e23b32" stroke-width="3"/><path d="M965 764l19 2-19 3z" fill="#e8352b"/>
      <g class="axis"><text x="879" y="682" fill="#3f8a50">YM</text><text x="880" y="751" fill="#2b4fe0">ZM</text><text x="970" y="760" fill="#d6362e">XM</text><text x="1037" y="530" fill="#bf3948">XC</text><text x="986" y="567" fill="#3f8a5a">YC</text><text x="1028" y="608" fill="#2e4fd0">ZC</text></g>
      <path d="M1401.500 445q2-6 7-7.500M1415.500 437.500q5 1.500 7 7.500M1401.500 453q2 6 7 7.500M1415.500 460.500q5-1.500 7-7.500" fill="none" stroke="#444" stroke-width="1.500"/>
      <path d="M1412 434v30M1397 449h30" stroke="#222" stroke-width="3"/><path d="M1412 435v28M1398 449h28" stroke="#eee"/>
    </svg>
  </section>
</main>
</body>
</html>
```
FILE: styles.css
```css
* { box-sizing: border-box; }
body {
  margin: 0;
  height: 100vh;
  display: flex;
  flex-direction: column;
  overflow: hidden;
  background: #fff;
  color: #333;
  font: 11px/16px "Open Sans", "Noto Sans", sans-serif;
}
button {
  margin: 0;
  padding: 0;
  border: 0;
  background: none;
  color: inherit;
  font: inherit;
}
svg { display: block; flex: none; }
.defs { position: absolute; width: 0; height: 0; }
.quick-strip { height: 7px; overflow: hidden; }

.tabs { display: flex; height: 25px; background: #dbdbdb; }
.tab { font-size: 12px; color: #444; white-space: nowrap; }
.tab-file { width: 51px; padding-right: 8px; background: #4a98b9; color: #fff; }
.tab-on { width: 60px; background: #fff; color: #1f6f8f; }
.w52 { width: 52px; } .w56 { width: 56px; } .w58 { width: 58px; } .w64 { width: 64px; }
.w68 { width: 68px; } .w72 { width: 72px; } .w84 { width: 84px; } .w86 { width: 86px; } .w99 { width: 99px; }

.caret {
  width: 0;
  height: 0;
  border: 3px solid transparent;
  border-top: 4px solid #222;
  border-bottom: 0;
}
.ribbon { display: flex; height: 82px; padding-top: 4px; border-bottom: 1px solid #ddd; }
.group { display: flex; flex-direction: column; flex: none; height: 77px; border-right: 1px solid #ddd; }
.group:last-child { flex: 1; border: 0; }
.tools { display: grid; flex: 1; min-height: 0; }
.group footer {
  position: relative;
  height: 14px;
  line-height: 14px;
  padding-right: 20px;
  text-align: center;
  color: #23718f;
  white-space: nowrap;
}
.group footer .caret { position: absolute; right: 7px; top: 3px; }
.g-insert { width: 188px; } .g-insert .tools { grid-template-columns: 44px 52px 64px 20px; }
.g-actions { width: 72px; } .g-actions .tools { grid-template-columns: 1fr; }
.g-operations { width: 347px; } .g-operations .tools { padding-left: 8px; grid-template-columns: 53px 56px 52px 45px 84px 48px; }
.g-display { width: 119px; } .g-display .tools { padding-left: 8px; grid-template-columns: 24px 11px 24px 11px 24px 11px; grid-template-rows: 19px 21px 21px; align-items: stretch; }
.g-animation { width: 216px; } .g-animation .tools { padding-left: 7px; grid-template-columns: 40px 36px 28px 28px 67px; }
.g-workpiece { width: 114px; } .g-workpiece .tools { padding-left: 8px; grid-template-columns: 24px 24px 50px; }
.g-analysis { width: 70px; } .g-analysis .tools { grid-template-columns: 1fr; }
.g-geometry { width: 117px; } .g-geometry .tools { grid-template-columns: 52px 54px; }
.g-sync { width: 191px; } .g-sync .tools { padding-left: 2px; grid-template-columns: 49px 94px 44px; }
.g-sync .wide { margin-left: -2px; }
.g-find .tools { grid-template-columns: 64px; }

.tool {
  display: flex;
  flex-direction: column;
  align-items: center;
  line-height: 12px;
  white-space: nowrap;
}
.tool > svg { width: 30px; height: 30px; margin-bottom: 6px; }
.tool > .caret { margin-top: 4px; }
.tool span .caret { display: inline-block; margin-left: 3px; vertical-align: 2px; }
.tool:disabled { color: #bbb; }
.tool:disabled svg { opacity: .6; }
.grey { filter: grayscale(1); opacity: .6; }
.dim { opacity: .55; }
.framed {
  display: grid;
  place-items: center;
  width: 36px;
  height: 33px;
  margin-bottom: 3px;
  border: 1px solid #ddd;
  border-radius: 3px;
}
.framed svg { width: 18px; height: 18px; }
.stack { display: flex; flex-direction: column; }
.mini { display: flex; align-items: center; justify-content: center; }
.mini svg { width: 18px; height: 18px; }
.stack .mini { height: 21px; }
.stack .mini:first-child { height: 18px; }
.mini.named { justify-content: flex-start; gap: 2px; white-space: nowrap; }
.on { background: #cde5ee; }
.g-display .caret { align-self: center; justify-self: center; }
.speed { display: flex; flex-direction: column; align-items: center; gap: 9px; padding-top: 8px; }
select {
  appearance: none;
  border: 1px solid #999;
  border-radius: 0;
  padding: 0 4px;
  height: 17px;
  color: #222;
  font: inherit;
  line-height: 15px;
  background: linear-gradient(to bottom right, #222 50%, transparent 50%) right 4px top 6px / 4px 4px no-repeat,
    linear-gradient(to bottom left, #222 50%, transparent 50%) right 8px top 6px / 4px 4px no-repeat, #fff;
}
.speed select { width: 67px; }

.subbar { display: flex; align-items: center; height: 28px; }
.subbar > .mini { width: 24px; height: 22px; }
.subbar > .on { width: 22px; margin: 0 1px; }
.subbar > .caret { margin: 0 3px 0 2px; }
.menu { display: flex; align-items: center; gap: 2px; width: 62px; padding-left: 3px; }
.menu svg { width: 16px; height: 16px; }
.menu span { font-size: 12px; }
.sep { width: 1px; height: 20px; margin: 0 6px 0 5px; background: #ddd; }
.sep.tight { margin: 0 7px 0 4px; }
.filter { width: 115px; margin-left: 7px; }
.scope { width: 121px; margin: 0 4px 0 9px; }

.work { display: grid; grid-template-columns: 25px 668fr 798fr; flex: 1; min-height: 0; border-top: 1px solid #999; }
.rail { display: flex; flex-direction: column; background: #d5d5d5; border-right: 2px solid #bbb; overflow: hidden; }
.rail button { display: flex; flex: none; align-items: center; justify-content: center; height: 40px; }
.rail svg { width: 24px; height: 24px; }
.rail .r-gear { height: 24px; padding-right: 6px; margin-bottom: 16px; }
.rail .r-gear svg { width: 16px; height: 16px; }
.rail .active { height: 42px; background: #fff; margin-right: -2px; }
.rail .tall { height: 52px; align-items: flex-end; padding-bottom: 8px; }
.navigator { display: flex; flex-direction: column; min-width: 0; padding: 0 10px 0 6px; border-right: 1px solid #aaa; overflow: hidden; }
.navigator header { display: flex; justify-content: space-between; align-items: center; height: 27px; padding: 0 5px 0 3px; flex: none; }
.navigator h1 { margin: 0; font-size: 11px; font-weight: 400; }
.navigator header button { width: 12px; height: 11px; border: 1px solid #222; border-top-width: 2px; }
.table-wrap { overflow: hidden; min-height: 0; }
table { width: 100%; table-layout: fixed; border-collapse: separate; border-spacing: 0; border-left: 1px solid #ddd; border-top: 1px solid #ddd; }
.c48 { width: 48px; } .c96 { width: 96px; } .c14 { width: 14px; }
th, td { height: 19px; padding: 0 0 0 4px; text-align: left; font-weight: 400; line-height: 16px; white-space: nowrap; overflow: hidden; border-right: 1px solid #e9e9e9; border-bottom: 1px solid #e9e9e9; }
td:first-child { padding-left: 3px; }
th { height: 18px; padding-left: 6px; background: #f1f1f1; border-color: #d4d4d4; }
tbody tr:nth-child(even) { background: #f9f9f9; }
tbody tr:nth-child(6n+3) td { height: 20px; }
tbody td:first-child { border-right-color: #222; }
.node { display: flex; align-items: center; height: 18px; }
.mark svg { margin: 0 auto 0 1px; }

.viewport { display: flex; flex-direction: column; min-width: 0; min-height: 0; }
.doc-tabs { display: flex; height: 19px; flex: none; border-bottom: 2px solid #4a98b9; }
.doc-tab { display: flex; align-items: center; gap: 5px; height: 18px; padding: 0 4px 0 3px; background: #4a98b9; color: #fff; white-space: nowrap; }
.scene { flex: 1; width: 100%; min-height: 0; }
.axis { font: 12px "Liberation Sans", sans-serif; }
```
